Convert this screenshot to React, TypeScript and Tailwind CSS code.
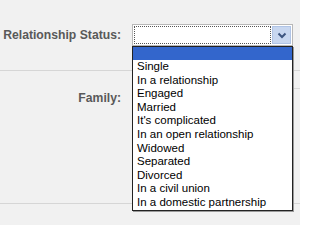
const options = [
  "Single",
  "In a relationship",
  "Engaged",
  "Married",
  "It's complicated",
  "In an open relationship",
  "Widowed",
  "Separated",
  "Divorced",
  "In a civil union",
  "In a domestic partnership",
];

function ChevronDown() {
  return (
    <svg width="10" height="7" viewBox="0 0 10 7" fill="none">
      <path d="M1.5 1.5 L5 5 L8.5 1.5" stroke="#3d5580" strokeWidth="2" />
    </svg>
  );
}

export default function App() {
  return (
    <div
      className="relative w-[300px] h-[225px] overflow-hidden bg-[#f1f1f1]"
      style={{ fontFamily: '"Liberation Sans", Arial, sans-serif' }}
    >
      <div className="flex items-center pt-[24px] gap-[11px]">
        <div className="w-[121px] shrink-0 whitespace-nowrap text-right text-[12.2px] font-bold text-[#595959]">
          Relationship Status:
        </div>
        <div className="flex h-[22px] w-[161px] shrink-0 border border-[#b8b8b8] bg-white p-[1px]">
          <div className="flex-1 border border-dotted border-[#555]" />
          <div className="ml-[1px] flex w-[19px] items-center justify-center bg-[#c8d7f0] border border-[#b0c4e6]">
            <ChevronDown />
          </div>
        </div>
      </div>

      <div className="mt-[24px] h-px bg-[#d6d6d6]" />

      <div className="mt-[16px] flex items-center h-[22px]">
        <div className="w-[121px] shrink-0 whitespace-nowrap text-right text-[12.2px] font-bold text-[#595959]">
          Family:
        </div>
        <div className="ml-auto w-[8px] h-[20px] border-t border-l border-[#d8d8d8]" />
      </div>

      <div className="mt-[94px] h-px bg-[#d6d6d6]" />

      <div className="absolute left-[132px] top-[46px] w-[161px] border border-[#222] bg-white shadow-[1px_1px_0_#9a9a9a]">
        <div className="h-[13px] bg-[#3366cc]" />
        {options.map((o) => (
          <div
            key={o}
            className="h-[13.6px] pl-[4px] text-[11.5px] leading-[13.6px] text-black whitespace-nowrap"
          >
            {o}
          </div>
        ))}
      </div>
    </div>
  );
}
